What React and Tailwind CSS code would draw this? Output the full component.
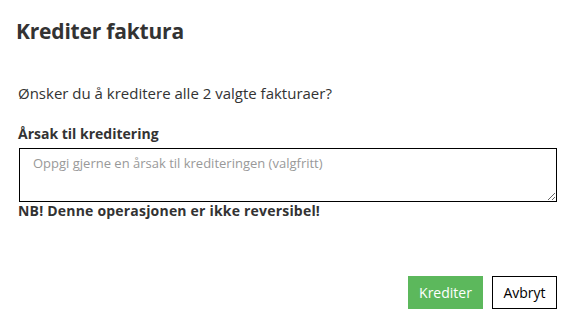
import React from 'react';

export default function App() {
  return (
    <div className="w-[577px] h-[328px] bg-white text-[#333] font-['Open_Sans',sans-serif] flex flex-col pl-[18px] pr-[20px]">
      <h1 className="mt-[16px] text-[21px] leading-[30px] font-bold -ml-[2px] tracking-[-0.2px]">Krediter faktura</h1>
      <p className="mt-[37px] text-[15px] leading-[20px]">Ønsker du å kreditere alle 2 valgte fakturaer?</p>
      <label className="mt-[22px] text-[14px] leading-[18px] font-bold">Årsak til kreditering</label>
      <textarea
        className="mt-[5px] ml-px h-[54px] border border-black px-[13px] py-[5px] text-[13px] leading-[18px] placeholder-[#999] outline-none"
        placeholder="Oppgi gjerne en årsak til krediteringen (valgfritt)"
      />
      <p className="text-[14px] leading-[18px] font-bold tracking-[0.2px]">NB! Denne operasjonen er ikke reversibel!</p>
      <div className="mt-auto mb-[19px] flex justify-end gap-[9px]">
        <button className="h-[33px] w-[75px] bg-[#5cb85c] text-white text-[14px]">Krediter</button>
        <button className="h-[33px] w-[65px] bg-white border border-black text-black text-[14px]">Avbryt</button>
      </div>
    </div>
  );
}
